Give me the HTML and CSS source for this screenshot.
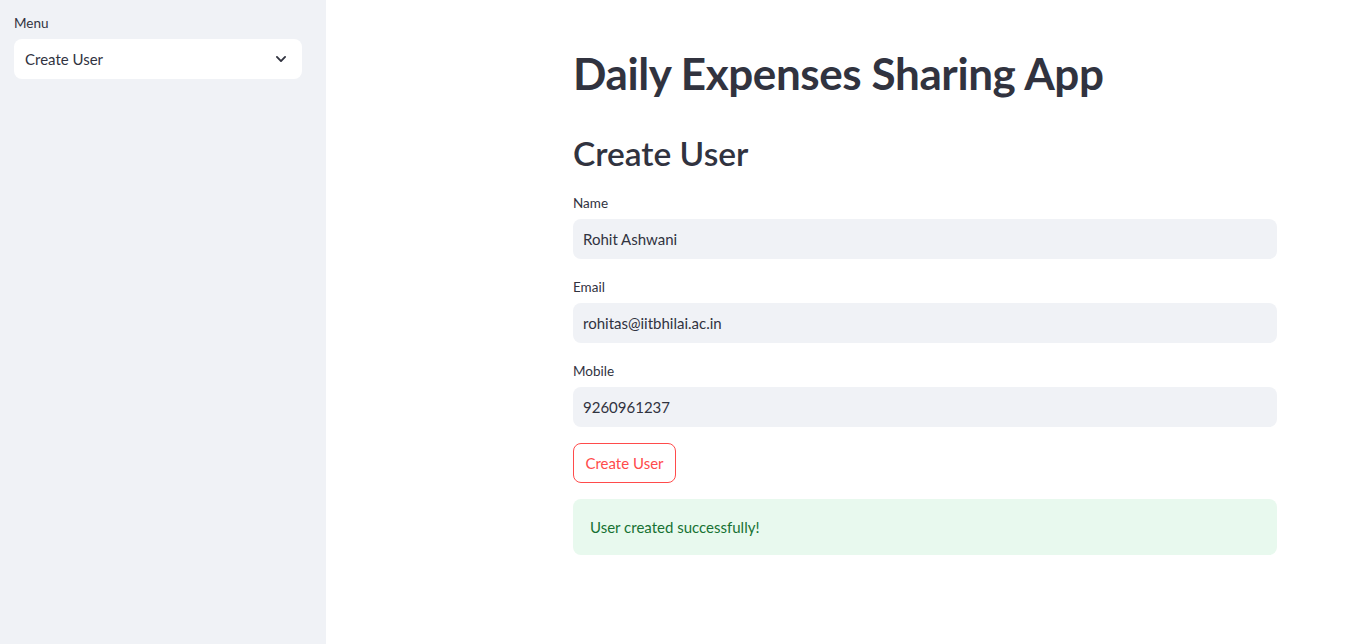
FILE: index.html
```html
<!DOCTYPE html>
<html>
<head>
<meta charset="utf-8">
<link rel="stylesheet" href="styles.css">
</head>
<body>
<div class="app">
  <aside class="sidebar">
    <div class="field-label side-label">Menu</div>
    <div class="select">
      <span>Create User</span>
      <svg class="chev" width="14" height="14" viewBox="0 0 24 24"><path d="M5 8.5l7 7 7-7" fill="none" stroke="#31333f" stroke-width="3.2" stroke-linecap="round" stroke-linejoin="round"/></svg>
    </div>
  </aside>
  <main class="main">
    <div class="content">
      <h1 class="title">Daily Expenses Sharing App</h1>
      <h2 class="subtitle">Create User</h2>
      <div class="field">
        <div class="field-label">Name</div>
        <div class="input">Rohit Ashwani</div>
      </div>
      <div class="field">
        <div class="field-label">Email</div>
        <div class="input">rohitas@iitbhilai.ac.in</div>
      </div>
      <div class="field">
        <div class="field-label">Mobile</div>
        <div class="input">9260961237</div>
      </div>
      <button class="btn">Create User</button>
      <div class="alert">User created successfully!</div>
    </div>
  </main>
</div>
</body>
</html>
```
FILE: styles.css
```css
* { box-sizing: border-box; }
html, body { margin: 0; padding: 0; }
body {
  font-family: "Lato", "Liberation Sans", sans-serif;
  color: #31333f;
  background: #ffffff;
}
.app { display: flex; min-height: 644px; }
.sidebar {
  width: 326px;
  flex: 0 0 326px;
  background: #f0f2f6;
  padding: 14px 24px 0 14px;
}
.field-label {
  font-size: 13.5px;
  line-height: 16px;
  color: #31333f;
}
.side-label { height: 25px; padding-top: 1px; }
.select {
  height: 40px;
  background: #fff;
  border-radius: 8px;
  display: flex;
  align-items: center;
  justify-content: space-between;
  padding: 0 14px 0 11px;
  font-size: 15px;
}
.chev { display: block; }
.main { flex: 1; padding: 0 79px 0 247px; }
.content { width: 704px; }
.title {
  margin: 0;
  padding-top: 47px;
  padding-bottom: 2px;
  font-size: 44px;
  line-height: 52px;
  font-weight: 700;
  letter-spacing: -0.4px;
}
.subtitle {
  margin: 0;
  padding-top: 30px;
  font-size: 33.5px;
  line-height: 44px;
  font-weight: 600;
}
.field { margin-top: 20px; }
.field .field-label { height: 24px; }
.input {
  height: 40px;
  background: #f0f2f6;
  border-radius: 8px;
  padding: 0 10px;
  display: flex;
  align-items: center;
  font-size: 15px;
}
.btn {
  margin-top: 16px;
  display: block;
  height: 40px;
  width: 103px;
  background: #fff;
  border: 1px solid #ff4b4b;
  border-radius: 8px;
  color: #ff4b4b;
  font-family: inherit;
  font-size: 15px;
  padding: 0;
}
.alert {
  margin-top: 16px;
  height: 56px;
  border-radius: 8px;
  background: #e8f9ee;
  color: #177233;
  display: flex;
  align-items: center;
  padding: 0 17px;
  font-size: 15px;
}
```
